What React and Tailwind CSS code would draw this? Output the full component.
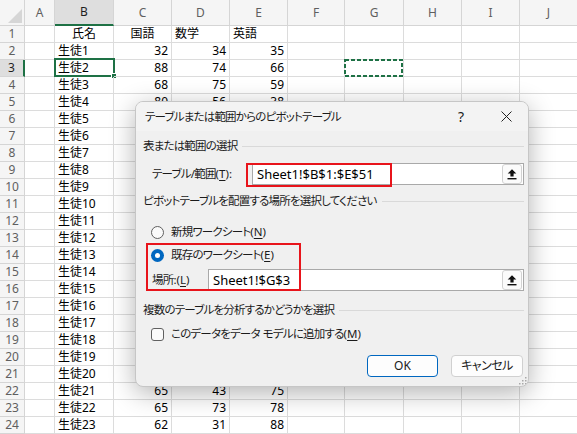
import React from "react";

const sheetFont = "font-['Noto_Sans','Noto_Sans_CJK_JP',sans-serif]";

const cols = ["A", "B", "C", "D", "E", "F", "G", "H", "I", "J"];

const students = [
  ["生徒1", 32, 34, 35],
  ["生徒2", 88, 74, 66],
  ["生徒3", 68, 75, 59],
  ["生徒4", 80, 56, 38],
  ["生徒5", 71, 62, 80],
  ["生徒6", 45, 90, 67],
  ["生徒7", 59, 48, 73],
  ["生徒8", 92, 66, 54],
  ["生徒9", 77, 81, 62],
  ["生徒10", 36, 57, 49],
  ["生徒11", 84, 70, 91],
  ["生徒12", 63, 39, 58],
  ["生徒13", 50, 85, 76],
  ["生徒14", 73, 64, 44],
  ["生徒15", 58, 72, 83],
  ["生徒16", 95, 53, 68],
  ["生徒17", 41, 77, 60],
  ["生徒18", 66, 88, 52],
  ["生徒19", 87, 46, 79],
  ["生徒20", 54, 69, 71],
  ["生徒21", 65, 43, 75],
  ["生徒22", 65, 73, 78],
  ["生徒23", 62, 31, 88],
];

// header row (氏名 / 国語 centered, 数学 / 英語 left like the sheet)
const headRow = [
  { v: "氏名", align: "center" },
  { v: "国語", align: "center" },
  { v: "数学", align: "left" },
  { v: "英語", align: "left" },
];

const alignCls = {
  left: "text-left pl-[3px]",
  right: "text-right pr-[3px]",
  center: "text-center",
};

const Cell = ({ value, align = "left", children }) => (
  <div
    className={`relative border-r border-b border-[#dcdcdc] text-[12px] leading-[16px] text-black whitespace-nowrap ${alignCls[align]}`}
  >
    {value}
    {children}
  </div>
);

const RowHead = ({ n, active }) => (
  <div
    className={`border-b border-[#d5d5d5] text-center text-[12px] leading-[16px] ${
      active
        ? "bg-[#dedede] border-r-2 border-r-[#1e7145] text-[#1e1e1e]"
        : "bg-[#f5f5f5] border-r text-[#5f5f5f]"
    }`}
  >
    {n}
  </div>
);

const Sheet = () => {
  const rows = [headRow, ...students.map(([name, a, b, c]) => [
    { v: name, align: "left" },
    { v: a, align: "right" },
    { v: b, align: "right" },
    { v: c, align: "right" },
  ])];

  return (
    <div className="grid grid-cols-[25px_30px_59px_58px_58px_58px_57px_59px_58px_58px_58px] grid-rows-[26px_repeat(24,17px)]">
      {/* corner */}
      <div className="relative bg-[#f5f5f5] border-r border-b border-[#d5d5d5]">
        <svg className="absolute right-[2px] bottom-[2px]" width="14" height="14" viewBox="0 0 14 14">
          <path d="M14 0 L14 14 L0 14 Z" fill="#d6d6d6" />
        </svg>
      </div>
      {cols.map((c) => (
        <div
          key={c}
          className={`flex items-center justify-center text-[12px] ${
            c === "B"
              ? "bg-[#dedede] border-r border-[#d5d5d5] border-b-2 border-b-[#1e7145] text-[#1e1e1e]"
              : "bg-[#f5f5f5] border-r border-b border-[#d5d5d5] text-[#5f5f5f]"
          }`}
        >
          {c}
        </div>
      ))}

      {rows.map((row, i) => (
        <React.Fragment key={i}>
          <RowHead n={i + 1} active={i === 2} />
          <Cell />
          <Cell value={row[0].v} align={row[0].align}>
            {i === 2 && (
              <div className="absolute -left-[1px] -top-[2px] w-[61px] h-[19px] border-2 border-[#1e7145]">
                <div className="absolute -right-[4px] -bottom-[4px] w-[6px] h-[6px] bg-[#1e7145] border border-white" />
              </div>
            )}
          </Cell>
          <Cell value={row[1].v} align={row[1].align} />
          <Cell value={row[2].v} align={row[2].align} />
          <Cell value={row[3].v} align={row[3].align} />
          <Cell />
          <Cell>
            {i === 2 && (
              <svg className="absolute -left-[1px] -top-[1px]" width="59" height="18" viewBox="0 0 59 18">
                <rect x="1" y="1" width="57" height="16" fill="none" stroke="#1e7145" strokeWidth="2" strokeDasharray="4 2" />
              </svg>
            )}
          </Cell>
          <Cell />
          <Cell />
          <Cell />
        </React.Fragment>
      ))}
    </div>
  );
};

// access key, e.g. (T) with underlined letter; latin part keeps normal spacing
const Mn = ({ k, after = "" }) => (
  <span className="tracking-normal">
    (<span className="underline underline-offset-[2px]">{k}</span>){after}
  </span>
);

const SectionHeader = ({ children, className = "" }) => (
  <div className={`flex items-center gap-[5px] h-[16px] ${className}`}>
    <span className="whitespace-nowrap leading-[16px]">{children}</span>
    <div className="flex-1 h-px bg-[#d9d9d9]" />
  </div>
);

const CollapseButton = () => (
  <div className="mr-[1px] w-[20px] h-[20px] rounded-[3px] border border-[#d2d2d2] bg-[#fbfbfb] flex items-center justify-center">
    <svg width="12" height="12" viewBox="0 0 12 12">
      <path d="M6 1.2 L10.3 5.6 H7.6 V8.6 H4.4 V5.6 H1.7 Z" fill="#111" />
      <rect x="1.5" y="10" width="9" height="1.4" fill="#111" />
    </svg>
  </div>
);

const RangeInput = ({ value }) => (
  <div className="flex-1 h-[22px] bg-white border border-[#a9a9a9] flex items-center">
    <span className="flex-1 pl-[4px] text-[13px] leading-[16px] tracking-normal text-black">{value}</span>
    <CollapseButton />
  </div>
);

const Radio = ({ checked }) =>
  checked ? (
    <div className="w-[13px] h-[13px] rounded-full bg-[#0067c0] flex items-center justify-center">
      <div className="w-[5px] h-[5px] rounded-full bg-white" />
    </div>
  ) : (
    <div className="w-[13px] h-[13px] rounded-full border border-[#606060] bg-[#fafafa]" />
  );

const PivotDialog = () => (
  <div
    className={`absolute left-[135px] top-[101px] w-[394px] h-[286px] rounded-[8px] border border-[#c6c6c6] bg-[#f0f0f0] shadow-[0_6px_26px_rgba(0,0,0,0.3)] overflow-hidden text-[11.5px] tracking-[-0.8px] [font-feature-settings:'palt'] text-[#1b1b1b] ${sheetFont}`}
  >
    {/* title bar */}
    <div className="h-[29px] bg-[#f3f3f3] flex items-center">
      <div className="flex-1 pl-[9px] leading-[16px]">テーブルまたは範囲からのピボットテーブル</div>
      <div className="w-[46px] text-center text-[14px] leading-[16px] tracking-normal">?</div>
      <div className="w-[44px] flex justify-center">
        <svg width="11" height="11" viewBox="0 0 11 11">
          <path d="M0.5 0.5 L10.5 10.5 M10.5 0.5 L0.5 10.5" stroke="#222" strokeWidth="1" />
        </svg>
      </div>
    </div>

    <div className="pl-[7px] pr-[4px]">
      <SectionHeader className="mt-[7px]">表または範囲の選択</SectionHeader>
      <div className="mt-[9px] flex items-center pl-[9px]">
        <div className="w-[100px] leading-[16px]">
          テーブル/範囲<Mn k="T" after=":" />
        </div>
        <RangeInput value="Sheet1!$B$1:$E$51" />
      </div>

      <SectionHeader className="mt-[8px]">ピボットテーブルを配置する場所を選択してください</SectionHeader>
      <div className="mt-[15px] flex items-center gap-[7px] pl-[8px] h-[16px]">
        <Radio />
        <span className="leading-[16px]">
          新規ワークシート<Mn k="N" />
        </span>
      </div>
      <div className="mt-[7px] flex items-center gap-[7px] pl-[8px] h-[16px]">
        <Radio checked />
        <span className="leading-[16px]">
          既存のワークシート<Mn k="E" />
        </span>
      </div>
      <div className="mt-[6px] flex items-center pl-[9px]">
        <div className="w-[56px] leading-[16px]">
          場所<span className="tracking-normal">:</span>
          <Mn k="L" />
        </div>
        <RangeInput value="Sheet1!$G$3" />
      </div>

      <SectionHeader className="mt-[11px]">複数のテーブルを分析するかどうかを選択</SectionHeader>
      <div className="mt-[8px] flex items-center gap-[7px] pl-[8px] h-[16px]">
        <div className="w-[13px] h-[13px] rounded-[3px] border border-[#606060] bg-[#fafafa]" />
        <span className="leading-[16px]">
          このデータをデータ<span className="tracking-normal"> </span>モデルに追加する<Mn k="M" />
        </span>
      </div>

      <div className="mt-[13px] flex justify-end gap-[13px] pr-[1px]">
        <button className="w-[71px] h-[22px] rounded-[4px] border border-[#0067c0] bg-[#fdfdfd] text-[12px] leading-[16px] tracking-normal">
          OK
        </button>
        <button className="w-[72px] h-[22px] rounded-[4px] border border-[#d0d0d0] bg-[#fdfdfd] text-[12px] leading-[16px] tracking-[-0.5px]">
          キャンセル
        </button>
      </div>
    </div>

    {/* red annotation boxes */}
    <div className="absolute left-[110px] top-[61px] w-[146px] h-[24px] border-2 border-[#e8141b]" />
    <div className="absolute left-[10px] top-[141px] w-[155px] h-[48px] border-2 border-[#e8141b]" />

    {/* resize grip */}
    <svg className="absolute right-[1px] bottom-[1px]" width="9" height="9" viewBox="0 0 9 9">
      <rect x="7" y="1" width="1.5" height="1.5" fill="#a8a8a8" />
      <rect x="4" y="4" width="1.5" height="1.5" fill="#a8a8a8" />
      <rect x="7" y="4" width="1.5" height="1.5" fill="#a8a8a8" />
      <rect x="1" y="7" width="1.5" height="1.5" fill="#a8a8a8" />
      <rect x="4" y="7" width="1.5" height="1.5" fill="#a8a8a8" />
      <rect x="7" y="7" width="1.5" height="1.5" fill="#a8a8a8" />
    </svg>
  </div>
);

export default function App() {
  return (
    <div className={`relative w-[577px] h-[434px] overflow-hidden bg-white ${sheetFont}`}>
      <Sheet />
      <PivotDialog />
    </div>
  );
}
